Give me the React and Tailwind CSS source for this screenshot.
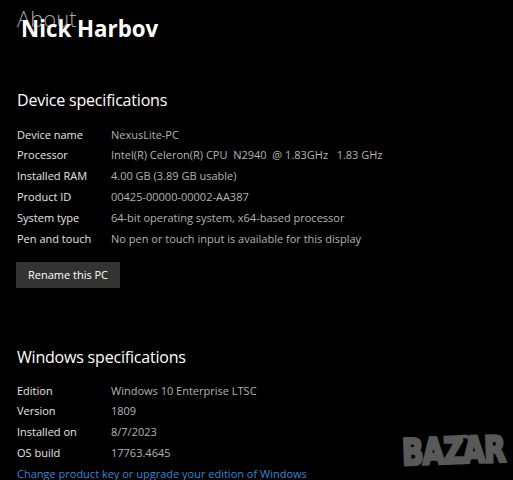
import React from "react";

const device = [
  ["Device name", "NexusLite-PC"],
  ["Processor", "Intel(R) Celeron(R) CPU  N2940  @ 1.83GHz   1.83 GHz"],
  ["Installed RAM", "4.00 GB (3.89 GB usable)"],
  ["Product ID", "00425-00000-00002-AA387"],
  ["System type", "64-bit operating system, x64-based processor"],
  ["Pen and touch", "No pen or touch input is available for this display"],
];

const windows = [
  ["Edition", "Windows 10 Enterprise LTSC"],
  ["Version", "1809"],
  ["Installed on", "8/7/2023"],
  ["OS build", "17763.4645"],
];

function SpecRow({ label, value }) {
  return (
    <div className="flex h-[20.8px] items-center text-[11px] leading-[20.8px]">
      <span className="w-[94px] shrink-0 text-[#e6e6e6]">{label}</span>
      <span className="whitespace-pre text-[#b4b4b4]">{value}</span>
    </div>
  );
}

// watermark in the bottom-right corner
function BazarLogo() {
  return (
    <div className="pointer-events-none absolute left-[400px] top-[428px] h-[48px] w-[106px]">
      <svg
        className="absolute left-[49px] top-[2px]"
        width="30"
        height="22"
        viewBox="0 0 30 22"
        fill="none"
      >
        <path d="M4 21 C7 6, 17 0, 26 15" stroke="#595959" strokeWidth="3.5" strokeLinecap="round" />
      </svg>
      <div className="absolute left-[2px] top-[6px] origin-left -rotate-2 scale-x-[0.78] whitespace-nowrap font-['DejaVu_Sans',sans-serif] text-[36px] font-bold leading-[38px] tracking-[-1px] text-[#595959] [-webkit-text-stroke:3px_#595959]">
        BAZAR
      </div>
    </div>
  );
}

export default function App() {
  return (
    <div className="relative h-[480px] w-[513px] overflow-hidden bg-black pl-[17px] font-['Open_Sans',sans-serif]">
      <div className="relative h-[88px]">
        <div className="pt-[8px] text-[22px] font-light leading-[21px] text-[#a8a8a8]">
          About
        </div>
        <div className="absolute left-[4px] top-[17.5px] text-[22.3px] font-bold leading-[22px] text-white [text-shadow:0_1px_2px_rgba(0,0,0,0.8)]">
          Nick Harbov
        </div>
      </div>

      <h2 className="text-[16px] leading-[24px] tracking-[-0.2px] text-white">
        Device specifications
      </h2>
      <div className="mt-[12.6px] flex flex-col">
        {device.map(([l, v]) => (
          <SpecRow key={l} label={l} value={v} />
        ))}
      </div>
      <button className="-ml-[1px] mt-[12.6px] h-[26px] w-[104px] bg-[#333333] text-[11px] text-white">
        Rename this PC
      </button>

      <h2 className="mt-[57px] text-[16px] leading-[24px] tracking-[-0.2px] text-white">
        Windows specifications
      </h2>
      <div className="mt-[11.6px] flex flex-col">
        {windows.map(([l, v]) => (
          <SpecRow key={l} label={l} value={v} />
        ))}
        <div className="h-[20.8px] text-[11px] leading-[20.8px] text-[#3587d6]">
          Change product key or upgrade your edition of Windows
        </div>
      </div>

      <BazarLogo />
    </div>
  );
}
